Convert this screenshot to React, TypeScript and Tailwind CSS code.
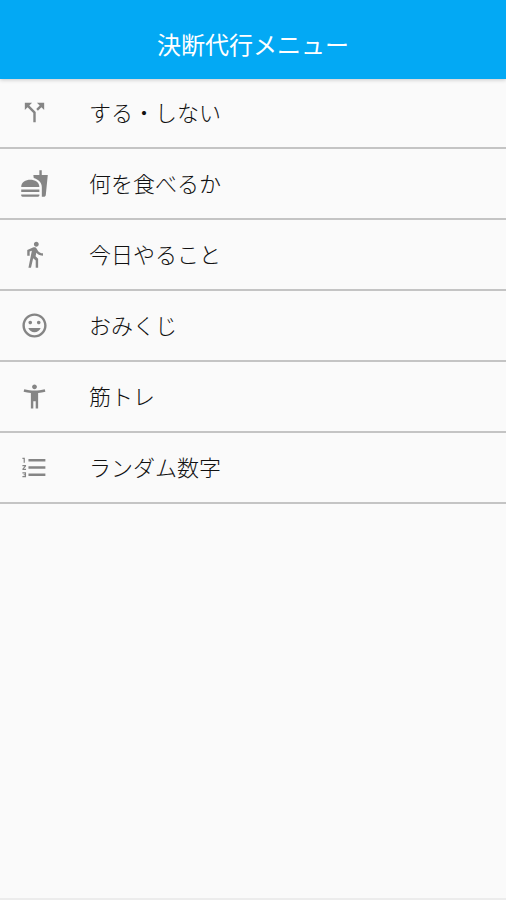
import React from 'react';
import {
  MdAccessibilityNew,
  MdCallSplit,
  MdDirectionsWalk,
  MdFastfood,
  MdFormatListNumbered,
  MdTagFaces,
} from 'react-icons/md';

const menuItems = [
  { label: 'する・しない', icon: MdCallSplit },
  { label: '何を食べるか', icon: MdFastfood },
  { label: '今日やること', icon: MdDirectionsWalk },
  { label: 'おみくじ', icon: MdTagFaces },
  { label: '筋トレ', icon: MdAccessibilityNew },
  { label: 'ランダム数字', icon: MdFormatListNumbered },
];

const App: React.FC = () => {
  return (
    <div className="flex min-h-screen flex-col border-b-2 border-[#ececec] bg-[#fafafa] font-['Noto_Sans_CJK_JP',sans-serif]">
      <header className="relative flex h-[79px] items-center justify-center bg-[#03a9f4] pt-2 shadow-[0_1px_4px_rgba(0,0,0,0.2)]">
        <h1 className="text-2xl font-normal text-white">決断代行メニュー</h1>
      </header>

      <nav>
        <ul className="-mt-px">
          {menuItems.map(({ label, icon: Icon }) => (
            <li key={label} className="border-b-2 border-[#c4c4c4]">
              <button type="button" className="flex h-[69px] w-full items-center px-5 text-left">
                <Icon className="size-[29px] shrink-0 text-[#858585]" />
                <span className="ml-10 pb-0.5 text-[22px] font-light text-[#111111]">{label}</span>
              </button>
            </li>
          ))}
        </ul>
      </nav>
    </div>
  );
};

export default App;
